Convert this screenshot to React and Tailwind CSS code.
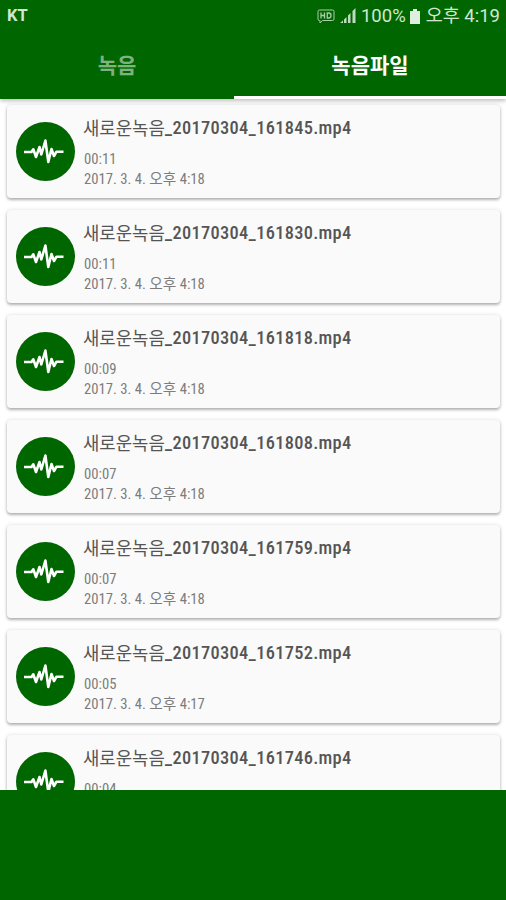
import React from "react";

const recordings = [
  { stamp: "_20170304_161845.mp4", length: "00:11", time: "4:18" },
  { stamp: "_20170304_161830.mp4", length: "00:11", time: "4:18" },
  { stamp: "_20170304_161818.mp4", length: "00:09", time: "4:18" },
  { stamp: "_20170304_161808.mp4", length: "00:07", time: "4:18" },
  { stamp: "_20170304_161759.mp4", length: "00:07", time: "4:18" },
  { stamp: "_20170304_161752.mp4", length: "00:05", time: "4:17" },
  { stamp: "_20170304_161746.mp4", length: "00:04", time: "" },
];

const WaveIcon = () => (
  <svg className="h-[59px] w-[59px] flex-none" viewBox="0 0 59 59">
    <circle cx="29.5" cy="29.5" r="29.5" fill="#006600" />
    <path
      d="M8 30H15.5L17.3 27.3L20 35L23.5 25L25.3 32.5L29.4 18.5L32.3 40L35.5 27L38 34L40.5 29.7H47.5"
      fill="none"
      stroke="#fff"
      strokeWidth="2.6"
      strokeLinejoin="round"
    />
  </svg>
);

const StatusBar = () => (
  <div className="flex h-8 items-center pl-[7px] pr-[6px] text-[#d3e6d3]">
    <span className="text-[16.5px] font-bold leading-none">KT</span>
    <svg className="ml-auto h-4 w-[18px]" viewBox="0 0 18 16" fill="none" stroke="#a9cca9">
      <path d="M2.5 2H15.5Q17 2 17 3.5V11Q17 12.5 15.5 12.5H5.5L3 15V12.5H2.5Q1 12.5 1 11V3.5Q1 2 2.5 2Z" strokeWidth="1" />
      <path d="M4 4.5V10.5M7.5 4.5V10.5M4 7.5H7.5M10.3 5V10H11.8Q14 10 14 7.5T11.8 5Z" strokeWidth="1.3" />
    </svg>
    <svg className="ml-[5px] h-4 w-4" viewBox="0 0 16 16" fill="#c0dac0">
      <path d="M0 15L3 12.5V15ZM4 11.5L6.5 9V15H4ZM8 7.5L10.5 5V15H8ZM12.5 3L15.5 0V15H12.5Z" />
    </svg>
    <span className="ml-[5px] text-[18.5px] leading-none">100%</span>
    <svg className="ml-1 h-[15px] w-[10px]" viewBox="0 0 10 15" fill="#e0eee0">
      <path d="M3 0H7V2H10V15H0V2H3Z" />
    </svg>
    <span className="ml-[6px] text-[18.5px] leading-none">오후 4:19</span>
  </div>
);

const RecordingCard = ({ item }) => (
  <div className="flex h-[93px] flex-none rounded-[4px] bg-[#fafafa] pl-[9px] pt-[17px] shadow-[0_2px_3px_rgba(0,0,0,0.27),0_0_4px_rgba(0,0,0,0.12)]">
    <WaveIcon />
    <div className="ml-[9px] whitespace-nowrap text-[#7c7c7c]">
      <div className="-mt-[2px] flex h-[18px] items-center leading-none text-[#555]">
        <span className="-ml-px text-[17.8px]">새로운녹음</span>
        <span className="pb-px text-[18.4px] font-medium tracking-[0.3px] font-stretch-condensed">{item.stamp}</span>
      </div>
      <div className="mt-[11px] flex h-5 items-center text-[14.7px] leading-none font-stretch-condensed">{item.length}</div>
      {item.time && (
        <div className="flex h-5 items-center text-[14.7px] leading-none font-stretch-condensed">2017. 3. 4. 오후 {item.time}</div>
      )}
    </div>
  </div>
);

function App() {
  return (
    <div className="flex h-[900px] w-[506px] flex-col overflow-hidden bg-[#006600] font-['Roboto','Noto_Sans_CJK_KR',sans-serif]">
      <header className="relative z-10 flex h-[99px] flex-none flex-col bg-[#006600] shadow-[0_2px_4px_rgba(0,0,0,0.25)]">
        <StatusBar />
        <nav className="flex flex-1 text-[21px] font-bold leading-none">
          <div className="flex w-[234px] items-center justify-center pt-[2px] text-white/50">녹음</div>
          <div className="flex flex-1 items-center justify-center border-b-[3px] border-white pt-[5px] text-white">녹음파일</div>
        </nav>
      </header>

      <main className="flex h-[691px] flex-none flex-col gap-3 overflow-hidden bg-white pl-[7px] pr-[6px] pt-[6px]">
        {recordings.map((item) => (
          <RecordingCard key={item.stamp} item={item} />
        ))}
      </main>
    </div>
  );
}

export default App;
